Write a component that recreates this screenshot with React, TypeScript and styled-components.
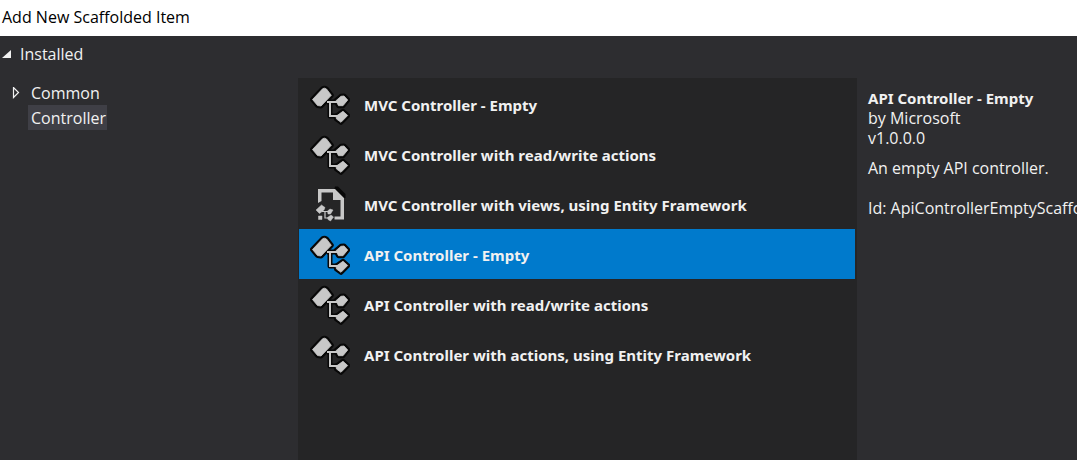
import React, { useState } from "react";
import styled, { createGlobalStyle } from "styled-components";

const GlobalStyle = createGlobalStyle`
  * { box-sizing: border-box; }
  html, body, #root { height: 100%; }
  body {
    margin: 0;
    overflow: hidden;
    background: #2d2d30;
    font: 16px/20px "Open Sans", "Noto Sans", sans-serif;
  }
  button { font: inherit; color: inherit; border: 0; padding: 0; margin: 0; background: none; }
`;

const Dialog = styled.div`
  display: flex;
  flex-direction: column;
  min-height: 100%;
  color: #f1f1f1;
`;

const TitleBar = styled.header`
  padding: 7px 2px 9px;
  background: #fff;
  color: #000;
`;

const Title = styled.h1`
  margin: 0;
  font: inherit;
`;

const Body = styled.main`
  flex: 1;
  display: grid;
  grid-template-columns: 298px minmax(0, 1fr) 220px;
`;

const Tree = styled.nav`
  display: flex;
  flex-direction: column;
  align-items: flex-start;
  padding-top: 5px;
`;

const TreeRoot = styled.button`
  display: flex;
  align-items: center;
  gap: 8px;
  height: 25px;
  padding-left: 2px;
`;

const TreeChildren = styled.div`
  display: flex;
  flex-direction: column;
  align-items: flex-start;
  padding: 14px 0 0 12px;
`;

const TreeNode = styled.div`
  display: flex;
  align-items: center;
  gap: 8px;
`;

const Arrow = styled.svg`
  flex: none;
  width: 10px;
  height: 12px;
`;

const TreeArrow = styled(Arrow)`
  width: 8px;
`;

const TreeLabel = styled.button<{ $active?: boolean }>`
  height: 25px;
  padding: 1px 1px 0 3px;
  background: ${(p) => (p.$active ? "#3f3f46" : "transparent")};
`;

const List = styled.section`
  display: flex;
  flex-direction: column;
  margin-top: 42px;
  padding: 1px 2px 0 1px;
  background: #252526;
`;

const Item = styled.button<{ $active: boolean }>`
  display: flex;
  align-items: center;
  gap: 14px;
  height: 50px;
  padding: 2px 0 0 11px;
  text-align: left;
  font-family: "Noto Sans", "Open Sans", sans-serif;
  font-size: 15px;
  font-weight: 700;
  white-space: nowrap;
  background: ${(p) => (p.$active ? "#007acc" : "transparent")};
`;

const Icon = styled.svg`
  flex: none;
  width: 40px;
  height: 40px;
`;

const Details = styled.aside`
  padding: 52px 0 0 11px;
  overflow: hidden;
  white-space: nowrap;
`;

const Heading = styled.h2`
  margin: 0;
  font-family: "Noto Sans", "Open Sans", sans-serif;
  font-size: 15px;
  font-weight: 700;
  line-height: 20px;
`;

const Line = styled.p<{ $space?: number }>`
  margin: ${(p) => p.$space ?? 0}px 0 0;
`;

const BLOCKS =
  "M2.5 14.5 12.8 3.6Q14.5 2.6 16.5 4L21.3 10.3 11 21 7.5 20.5Z M26 15.7 31 11.3 34 11 37.7 15 33 20.7H28.5Z M26 31.3 33 26.3 37.7 30.5 31 37.3 26.5 34Z";
const LINKS = "M17 17H29M20 17V31H28";

const ControllerIcon = () => (
  <Icon viewBox="0 0 40 40" aria-hidden="true">
    <g fill="none" stroke="#080808" strokeLinejoin="round">
      <path d={LINKS} strokeWidth="5" />
      <path d={BLOCKS} strokeWidth="5" />
    </g>
    <path d={BLOCKS} fill="#c8c8c8" stroke="#c8c8c8" strokeWidth="0.8" strokeLinejoin="round" />
    <path d={LINKS} fill="none" stroke="#c8c8c8" strokeWidth="2" />
  </Icon>
);

const ViewsIcon = () => (
  <Icon viewBox="0 0 40 40" aria-hidden="true">
    <path d="M25 1.5H28L35.5 9V13H32L24 5Z" fill="#080808" />
    <path
      d="M8 4H25L34 13V34.5H24.5V31.5H30.5V15H23V7.5H11.5V16L8 18Z"
      fill="#c8c8c8"
    />
    <path
      d="M6 25 11.5 20 15 22.5 14 25 9.5 28.5Z M17.5 26 20 24 23 25 20.5 29H18Z M17.5 32.5 21 30 23.5 32 20.5 36 18 34.5Z M8.5 31H12V34.5H8.5Z"
      fill="#c8c8c8"
      stroke="#c8c8c8"
      strokeWidth="0.5"
    />
    <path d="M12 26.5H19M15 26.5V33H19" fill="none" stroke="#c8c8c8" strokeWidth="1.2" />
  </Icon>
);

const items = [
  { name: "MVC Controller - Empty" },
  { name: "MVC Controller with read/write actions" },
  { name: "MVC Controller with views, using Entity Framework", views: true },
  { name: "API Controller - Empty" },
  { name: "API Controller with read/write actions" },
  { name: "API Controller with actions, using Entity Framework" },
];

export default function App() {
  const [selected, setSelected] = useState(3);
  return (
    <>
      <GlobalStyle />
      <Dialog>
        <TitleBar>
          <Title>Add New Scaffolded Item</Title>
        </TitleBar>
        <Body>
          <Tree aria-label="Categories">
            <TreeRoot>
              <Arrow viewBox="0 0 10 12" aria-hidden="true">
                <path d="M9 2V10H0Z" fill="#f1f1f1" />
              </Arrow>
              Installed
            </TreeRoot>
            <TreeChildren>
              <TreeNode>
                <TreeArrow viewBox="0 0 8 12" aria-hidden="true">
                  <path d="M1.5 0.5V10.5L6.5 5.5Z" fill="none" stroke="#f1f1f1" strokeWidth="1.2" />
                </TreeArrow>
                <TreeLabel>Common</TreeLabel>
              </TreeNode>
              <TreeNode>
                <TreeArrow viewBox="0 0 8 12" aria-hidden="true" />
                <TreeLabel $active>Controller</TreeLabel>
              </TreeNode>
            </TreeChildren>
          </Tree>
          <List aria-label="Scaffolds">
            {items.map((item, i) => (
              <Item
                key={item.name}
                $active={i === selected}
                aria-pressed={i === selected}
                onClick={() => setSelected(i)}
              >
                {item.views ? <ViewsIcon /> : <ControllerIcon />}
                {item.name}
              </Item>
            ))}
          </List>
          <Details>
            <Heading>API Controller - Empty</Heading>
            <Line>by Microsoft</Line>
            <Line>v1.0.0.0</Line>
            <Line $space={10}>An empty API controller.</Line>
            <Line $space={20}>Id: ApiControllerEmptyScaffolder</Line>
          </Details>
        </Body>
      </Dialog>
    </>
  );
}
